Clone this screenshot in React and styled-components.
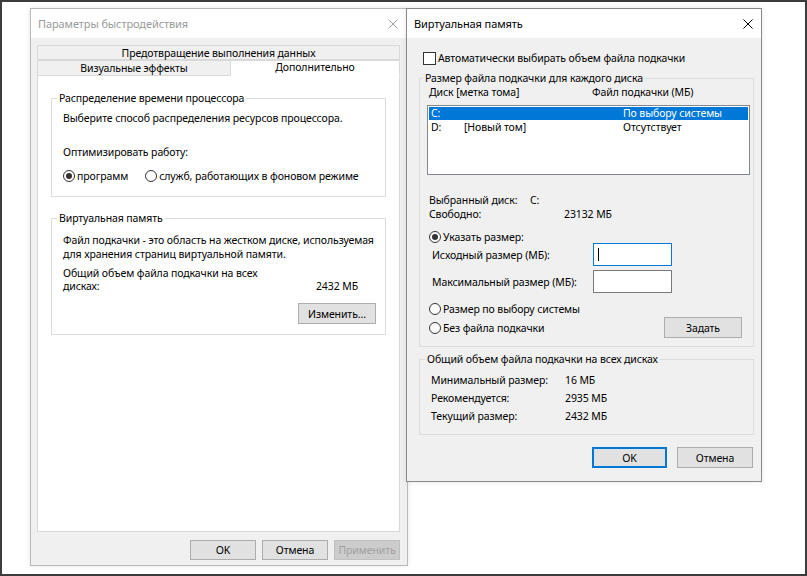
import React from 'react';
import styled, { createGlobalStyle } from 'styled-components';

const GlobalStyle = createGlobalStyle`
  html, body {
    margin: 0;
    padding: 0;
    background: #fff;
  }
  body {
    font-family: "Noto Sans", "Segoe UI", sans-serif;
    font-size: 10.5px;
    letter-spacing: -0.1px;
    white-space: nowrap;
    color: #000;
  }
  * {
    box-sizing: border-box;
  }
`;

const Desktop = styled.div`
  position: relative;
  width: 807px;
  height: 576px;
  border: 2px solid #3c3c3c;
  background: #fff;
  overflow: hidden;
`;

const Window = styled.div`
  position: absolute;
  left: ${p => p.$x}px;
  top: ${p => p.$y}px;
  width: ${p => p.$w}px;
  height: ${p => p.$h}px;
  z-index: ${p => (p.$active ? 2 : 1)};
  display: flex;
  flex-direction: column;
  background: #f0f0f0;
  border: 1px solid ${p => (p.$active ? '#8a8a8a' : '#b9b9b9')};
  box-shadow: 0 0 5px rgba(0, 0, 0, 0.1);
`;

const TitleBar = styled.div`
  height: 29px;
  flex: none;
  display: flex;
  align-items: center;
  justify-content: space-between;
  padding: 0 ${p => p.$padRight}px 0 7px;
  background: #fff;
  color: ${p => (p.$active ? '#000' : '#9a9a9a')};
  font-size: 11px;
`;

const CloseIcon = ({ color }) => (
  <svg width="10" height="10" viewBox="0 0 10 10">
    <path d="M0.5 0.5 L9.5 9.5 M9.5 0.5 L0.5 9.5" stroke={color} strokeWidth="1" fill="none" />
  </svg>
);

/* ---------- shared controls ---------- */

const Group = styled.fieldset`
  margin: ${p => p.$margin || 0};
  padding: ${p => p.$pad};
  border: 1px solid #dcdcdc;
  min-width: 0;
`;

// legend sits inside the fieldset's padding box, so pull it back to the border
const Legend = styled.legend`
  padding: 0 2px;
  margin-left: -6px;
  line-height: 14px;
`;

const Button = styled.div`
  width: ${p => p.$w}px;
  height: ${p => p.$h || 20}px;
  flex: none;
  display: flex;
  align-items: center;
  justify-content: center;
  background: ${p => (p.$disabled ? '#cccccc' : '#e1e1e1')};
  color: ${p => (p.$disabled ? '#a0a0a0' : '#000')};
  border: 1px solid ${p => (p.$default ? '#0078d7' : p.$disabled ? '#bfbfbf' : '#adadad')};
  box-shadow: ${p => (p.$default ? 'inset 0 0 0 1px #0078d7' : 'none')};
`;

const RadioCircle = styled.span`
  width: 12px;
  height: 12px;
  flex: none;
  border-radius: 50%;
  border: 1px solid #333;
  background: #fff;
  display: inline-flex;
  align-items: center;
  justify-content: center;
  margin-right: 2px;

  &::after {
    content: '';
    width: 6px;
    height: 6px;
    border-radius: 50%;
    background: ${p => (p.$checked ? '#333' : 'transparent')};
  }
`;

const RadioLabel = styled.label`
  display: flex;
  align-items: center;
  height: ${p => p.$h || 14}px;
  line-height: 14px;
  margin-top: ${p => p.$mt || 0}px;
`;

const Radio = ({ checked, children, h, mt }) => (
  <RadioLabel $h={h} $mt={mt}>
    <RadioCircle $checked={checked} />
    {children}
  </RadioLabel>
);

/* ---------- performance options dialog ---------- */

const LeftBody = styled.div`
  flex: 1;
  display: flex;
  flex-direction: column;
  padding: 7px 7px 5px 6px;
`;

const TabStrip = styled.div`
  display: flex;
  flex-direction: column;
`;

const TabRow = styled.div`
  display: grid;
  grid-template-columns: ${p => p.$cols};
`;

const Tab = styled.div`
  height: ${p => p.$h}px;
  display: flex;
  align-items: center;
  justify-content: center;
  padding-bottom: ${p => (p.$selected ? 3 : 0)}px;
  background: ${p => (p.$selected ? '#fff' : '#f0f0f0')};
  border: 1px solid #d9d9d9;
  border-bottom: ${p => (p.$selected ? '1px solid #fff' : '1px solid #d9d9d9')};
  margin-left: ${p => (p.$joined ? -1 : 0)}px;
`;

const Panel = styled.div`
  flex: 1;
  display: flex;
  flex-direction: column;
  gap: 14px;
  padding: 15px 13px 0 13px;
  background: #fff;
  border: 1px solid #d9d9d9;
  border-top: none;
`;

const Para = styled.div`
  line-height: 14px;
  margin-top: ${p => p.$mt || 0}px;
`;

const RadioLine = styled.div`
  display: flex;
  align-items: center;
  gap: 17px;
  margin-top: 10px;
`;

const TotalRow = styled.div`
  display: flex;
  justify-content: space-between;
  align-items: flex-end;
  line-height: 13px;
  margin-top: 6px;
`;

const TotalValue = styled.span`
  margin-right: 18px;
`;

const RightAlign = styled.div`
  display: flex;
  justify-content: flex-end;
  margin-top: ${p => p.$mt || 0}px;
  margin-right: ${p => p.$mr || 0}px;
  gap: ${p => p.$gap || 6}px;
`;

/* ---------- virtual memory dialog ---------- */

const RightBody = styled.div`
  flex: 1;
  display: flex;
  flex-direction: column;
  padding: 12px 7px 0 12px;
`;

const CheckRow = styled.label`
  display: flex;
  align-items: center;
  height: 16px;
  margin-left: 4px;
  gap: 2px;
`;

const CheckBox = styled.span`
  width: 13px;
  height: 13px;
  border: 1px solid #333;
  background: #fff;
`;

const ColumnHeads = styled.div`
  display: grid;
  grid-template-columns: 163px 1fr;
  line-height: 14px;
`;

const ListBox = styled.div`
  height: 70px;
  margin: 6px -8px 0 -2px;
  padding: 1px;
  background: #fff;
  border: 1px solid #828790;
`;

const ListRow = styled.div`
  display: grid;
  grid-template-columns: 33px 159px 1fr;
  height: 13px;
  line-height: 13px;
  padding-left: 2px;
  margin-bottom: 1px;
  background: ${p => (p.$selected ? '#0078d7' : 'transparent')};
  color: ${p => (p.$selected ? '#fff' : '#000')};
`;

const InfoRow = styled.div`
  display: grid;
  grid-template-columns: ${p => p.$indent}px 1fr;
  line-height: ${p => p.$lh || 14}px;
  margin-top: ${p => p.$mt || 0}px;
`;

const SizeRow = styled.div`
  display: grid;
  grid-template-columns: 161px 79px;
  align-items: center;
  padding-left: 3px;
  margin-top: ${p => p.$mt || 0}px;
`;

const TextInput = styled.div`
  height: 23px;
  display: flex;
  align-items: center;
  padding-left: 4px;
  background: #fff;
  border: 1px solid ${p => (p.$focused ? '#0078d7' : '#7a7a7a')};
`;

const Caret = styled.span`
  width: 1px;
  height: 13px;
  background: #000;
`;

const SpaceRow = styled.div`
  display: flex;
  align-items: center;
  justify-content: space-between;
  margin-top: ${p => p.$mt || 0}px;
`;

export default function App() {
  return (
    <>
      <GlobalStyle />
      <Desktop>
        <Window $x={28} $y={6} $w={378} $h={558}>
          <TitleBar $padRight={9}>
            <span>Параметры быстродействия</span>
            <CloseIcon color="#a0a0a0" />
          </TitleBar>
          <LeftBody>
            <TabStrip>
              <TabRow $cols="1fr">
                <Tab $h={15}>Предотвращение выполнения данных</Tab>
              </TabRow>
              <TabRow $cols="194px 1fr">
                <Tab $h={16}>Визуальные эффекты</Tab>
                <Tab $h={16} $selected $joined>Дополнительно</Tab>
              </TabRow>
            </TabStrip>
            <Panel>
              <Group $pad="6px 12px 13px 11px">
                <Legend>Распределение времени процессора</Legend>
                <Para>Выберите способ распределения ресурсов процессора.</Para>
                <Para $mt={20}>Оптимизировать работу:</Para>
                <RadioLine>
                  <Radio checked>программ</Radio>
                  <Radio>служб, работающих в фоновом режиме</Radio>
                </RadioLine>
              </Group>
              <Group $pad="8px 9px 10px 11px">
                <Legend>Виртуальная память</Legend>
                <Para>
                  Файл подкачки - это область на жестком диске, используемая
                  <br />
                  для хранения страниц виртуальной памяти.
                </Para>
                <TotalRow>
                  <span>
                    Общий объем файла подкачки на всех
                    <br />
                    дисках:
                  </span>
                  <TotalValue>2432 МБ</TotalValue>
                </TotalRow>
                <RightAlign $mt={10}>
                  <Button $w={78} $h={21}>Изменить...</Button>
                </RightAlign>
              </Group>
            </Panel>
            <RightAlign $mt={8}>
              <Button $w={66}>OK</Button>
              <Button $w={66}>Отмена</Button>
              <Button $w={66} $disabled>Применить</Button>
            </RightAlign>
          </LeftBody>
        </Window>

        <Window $x={404} $y={6} $w={356} $h={474} $active>
          <TitleBar $active $padRight={8}>
            <span>Виртуальная память</span>
            <CloseIcon color="#000" />
          </TitleBar>
          <RightBody>
            <CheckRow>
              <CheckBox />
              Автоматически выбирать объем файла подкачки
            </CheckRow>
            <Group $margin="5px 0 0 0" $pad="0 11px 8px 9px">
              <Legend>Размер файла подкачки для каждого диска</Legend>
              <ColumnHeads>
                <span>Диск [метка тома]</span>
                <span>Файл подкачки (МБ)</span>
              </ColumnHeads>
              <ListBox>
                <ListRow $selected>
                  <span>C:</span>
                  <span />
                  <span>По выбору системы</span>
                </ListRow>
                <ListRow>
                  <span>D:</span>
                  <span>[Новый том]</span>
                  <span>Отсутствует</span>
                </ListRow>
              </ListBox>
              <InfoRow $indent={101} $mt={18}>
                <span>Выбранный диск:</span>
                <span>C:</span>
              </InfoRow>
              <InfoRow $indent={135}>
                <span>Свободно:</span>
                <span>23132 МБ</span>
              </InfoRow>
              <Radio checked h={13} mt={9}>Указать размер:</Radio>
              <SizeRow>
                <span>Исходный размер (МБ):</span>
                <TextInput $focused>
                  <Caret />
                </TextInput>
              </SizeRow>
              <SizeRow $mt={4}>
                <span>Максимальный размер (МБ):</span>
                <TextInput />
              </SizeRow>
              <Radio mt={9}>Размер по выбору системы</Radio>
              <SpaceRow $mt={1}>
                <Radio>Без файла подкачки</Radio>
                <Button $w={78} $h={21}>Задать</Button>
              </SpaceRow>
            </Group>
            <Group $margin="5px 0 0 0" $pad="5px 11px 9px 11px">
              <Legend>Общий объем файла подкачки на всех дисках</Legend>
              <InfoRow $indent={134} $lh={18}>
                <span>Минимальный размер:</span>
                <span>16 МБ</span>
              </InfoRow>
              <InfoRow $indent={134} $lh={18}>
                <span>Рекомендуется:</span>
                <span>2935 МБ</span>
              </InfoRow>
              <InfoRow $indent={134} $lh={18}>
                <span>Текущий размер:</span>
                <span>2432 МБ</span>
              </InfoRow>
            </Group>
            <RightAlign $mt={12} $mr={1} $gap={10}>
              <Button $w={75} $h={21} $default>OK</Button>
              <Button $w={76} $h={21}>Отмена</Button>
            </RightAlign>
          </RightBody>
        </Window>
      </Desktop>
    </>
  );
}
